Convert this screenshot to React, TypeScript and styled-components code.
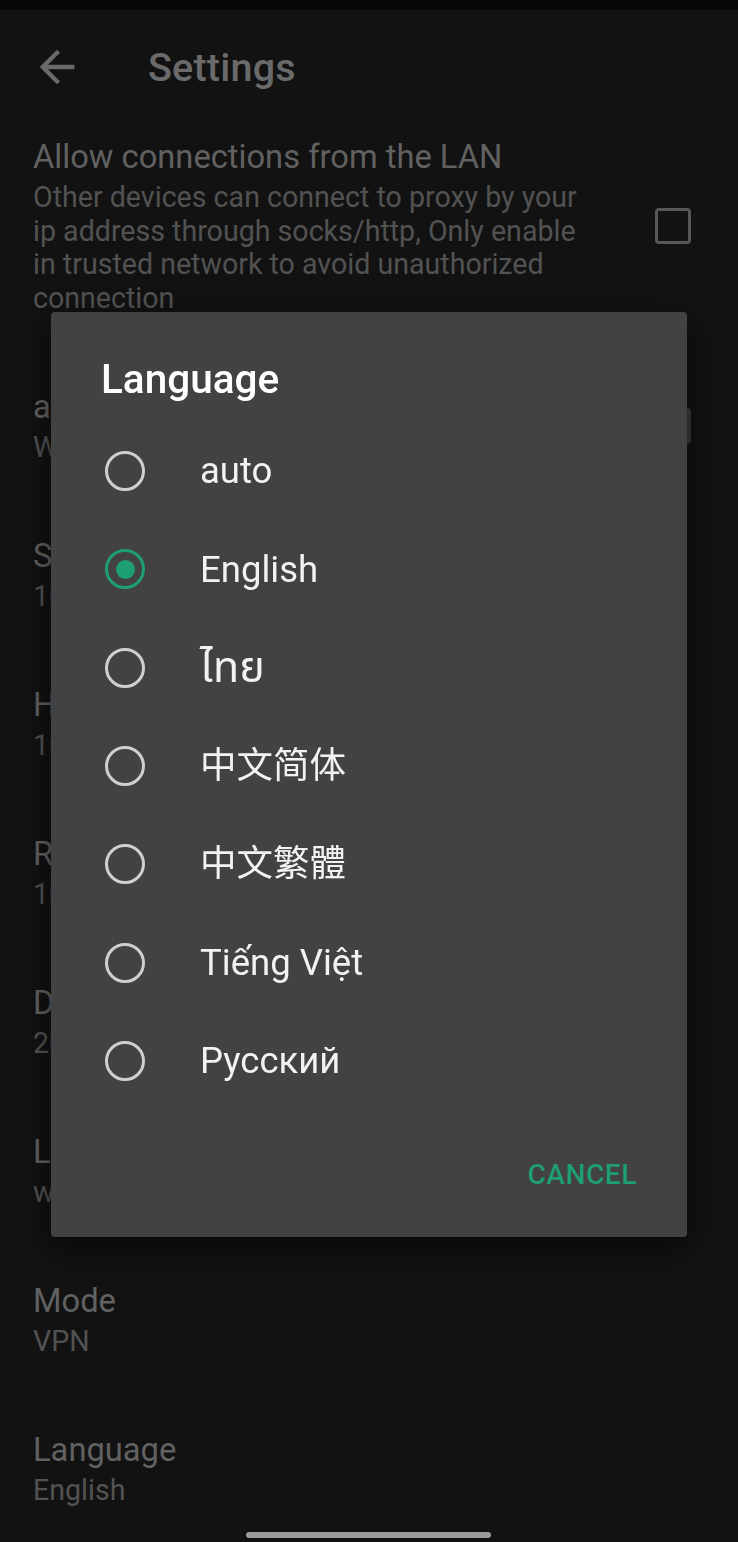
import React from "react";
import styled, { createGlobalStyle } from "styled-components";

const GlobalStyle = createGlobalStyle`
	html, body {
		margin: 0;
		padding: 0;
		background: #121212;
		overflow: hidden;
	}
	body {
		font-family: Roboto, "Noto Sans", "Noto Sans CJK SC", sans-serif;
	}
`;

const Page = styled.div`
	width: 738px;
	height: 1542px;
	background: #121212;
	overflow: hidden;
`;

const StatusBar = styled.div`
	height: 10px;
	background: #070707;
`;

const AppBar = styled.header`
	height: 114px;
	display: flex;
	align-items: center;
	padding-left: 31px;
	gap: 65px;
	color: #6a6a6a;

	h1 {
		margin: 0;
		font-size: 39.5px;
		font-weight: 500;
		letter-spacing: 0.2px;
	}
`;

const Pref = styled.div<{ $first?: boolean }>`
	display: flex;
	align-items: center;
	padding: ${(p) => (p.$first ? "13px 47px 36px 33px" : "35.8px 47px 35.8px 33px")};
`;

const PrefText = styled.div`
	flex: 1;
	max-width: 560px;

	.title {
		font-size: 32.7px;
		line-height: 40px;
		color: #616161;
		white-space: nowrap;
	}
	.summary {
		margin-top: 4px;
		font-size: 28.6px;
		line-height: 33.5px;
		color: #525252;
	}
`;

const CheckBox = styled.span<{ $checked?: boolean }>`
	margin-left: auto;
	width: 36px;
	height: 36px;
	box-sizing: border-box;
	border-radius: 4px;
	border: 3px solid ${(p) => (p.$checked ? "#3c3c3c" : "#575757")};
	background: ${(p) => (p.$checked ? "#3c3c3c" : "transparent")};
	flex-shrink: 0;
`;

const Scrim = styled.div`
	position: fixed;
	inset: 0;
	display: flex;
	align-items: center;
	justify-content: center;
	padding-top: 7px;
`;

const Dialog = styled.div`
	width: 636px;
	background: #424242;
	border-radius: 4px;
	box-shadow: 0 10px 32px rgba(0, 0, 0, 0.55);
	padding-top: 43px;
`;

const DialogTitle = styled.h2`
	margin: 0 0 19px;
	padding-left: 50px;
	font-size: 40.5px;
	line-height: 48px;
	font-weight: 500;
	color: #ffffff;
`;

const Option = styled.label`
	height: 98.3px;
	display: flex;
	align-items: center;
	padding-left: 54px;
	gap: 55px;
	font-size: 36.5px;
	color: #f2f2f2;
	font-family: Roboto, "Noto Sans", "Noto Sans CJK SC", "Noto Sans Thai", sans-serif;
`;

const OptionLabel = styled.span<{ $thai?: boolean }>`
	font-size: ${(p) => (p.$thai ? "43px" : "inherit")};
	line-height: 1.2;
`;

const Radio = styled.span<{ $on?: boolean }>`
	width: 40px;
	height: 40px;
	box-sizing: border-box;
	border-radius: 50%;
	border: 3.5px solid ${(p) => (p.$on ? "#1e9e74" : "#cfcfcf")};
	display: flex;
	align-items: center;
	justify-content: center;
	flex-shrink: 0;

	&::after {
		content: "";
		display: ${(p) => (p.$on ? "block" : "none")};
		width: 19px;
		height: 19px;
		border-radius: 50%;
		background: #1e9e74;
	}
`;

const Buttons = styled.div`
	display: flex;
	justify-content: flex-end;
	padding: 28px 50px 27px 0;
`;

const TextButton = styled.button`
	height: 72px;
	padding: 0;
	border: none;
	background: none;
	color: #1e9e74;
	font-family: Roboto, sans-serif;
	font-size: 28px;
	font-weight: 500;
	letter-spacing: 0.6px;
`;

const HomeHandle = styled.div`
	position: fixed;
	left: 246px;
	bottom: 4px;
	width: 245px;
	height: 6px;
	border-radius: 3px;
	background: #9a9a9a;
`;

const prefs = [
	{ title: "allow bypass apps", summary: "When enabled", checkbox: true },
	{ title: "Socks5 proxy port", summary: "1080" },
	{ title: "Http proxy port", summary: "10809" },
	{ title: "Redirect port", summary: "1081" },
	{ title: "DNS port", summary: "2053" },
	{ title: "Local DNS", summary: "www.google.com" },
	{ title: "Mode", summary: "VPN" },
	{ title: "Language", summary: "English" },
];

const languages = ["auto", "English", "ไทย", "中文简体", "中文繁體", "Tiếng Việt", "Русский"];

const App: React.FC = () => {
	return (
		<Page>
			<GlobalStyle />
			<StatusBar />
			<AppBar>
				<svg width="52" height="52" viewBox="0 0 24 24" fill="#6a6a6a">
					<path d="M20 11H7.83l5.59-5.59L12 4l-8 8 8 8 1.41-1.41L7.83 13H20v-2z" />
				</svg>
				<h1>Settings</h1>
			</AppBar>

			<Pref $first>
				<PrefText>
					<div className='title'>Allow connections from the LAN</div>
					<div className='summary'>
						Other devices can connect to proxy by your ip address through socks/http, Only enable in trusted network to avoid unauthorized connection
					</div>
				</PrefText>
				<CheckBox />
			</Pref>
			{prefs.map((p) => (
				<Pref key={p.title}>
					<PrefText>
						<div className='title'>{p.title}</div>
						<div className='summary'>{p.summary}</div>
					</PrefText>
					{p.checkbox && <CheckBox $checked />}
				</Pref>
			))}

			<Scrim>
				<Dialog>
					<DialogTitle>Language</DialogTitle>
					{languages.map((lang) => (
						<Option key={lang}>
							<Radio $on={lang === "English"} />
							<OptionLabel $thai={lang === "ไทย"}>{lang}</OptionLabel>
						</Option>
					))}
					<Buttons>
						<TextButton>CANCEL</TextButton>
					</Buttons>
				</Dialog>
			</Scrim>
			<HomeHandle />
		</Page>
	);
};

export default App;
